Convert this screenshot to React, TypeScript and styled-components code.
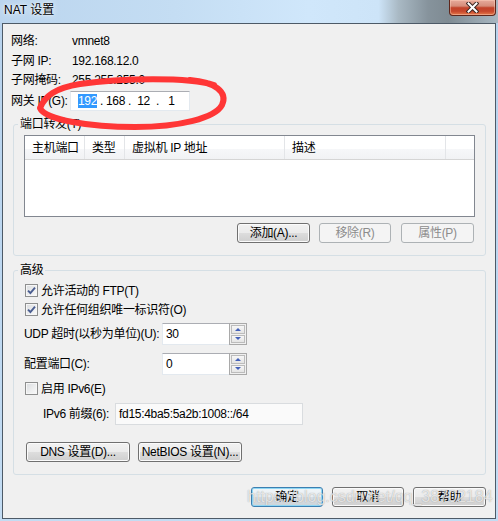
import React from 'react';
import styled, { createGlobalStyle, css } from 'styled-components';

const GlobalStyle = createGlobalStyle`
  html, body { margin: 0; padding: 0; }
  body {
    width: 498px; height: 521px; overflow: hidden;
    font-family: "Liberation Sans", "Noto Sans CJK SC", sans-serif;
    font-size: 12px; color: #000;
    letter-spacing: -0.3px;
  }
  * { box-sizing: border-box; }
`;

const Window = styled.div`
  position: relative;
  width: 498px;
  height: 521px;
  display: flex;
  flex-direction: column;
  background: linear-gradient(180deg, #b7d2ed 0%, #c3dcf3 100%);
  overflow: hidden;
`;

const TitleBar = styled.div`
  height: 23px;
  flex: none;
  display: flex;
  align-items: flex-start;
  background: linear-gradient(90deg, #bbd5ee 0%, #c4ddf3 35%, #d0e7fb 62%, #cde4f8 76%, #a9b9c4 80%, #86939c 86%, #7f8b93 90%, #a8b7c2 100%);
`;

const Title = styled.div`
  padding: 3px 0 0 4px;
  line-height: 15px;
  font-size: 12px;
  letter-spacing: 0;
  text-shadow: 0 0 6px rgba(255, 255, 255, 0.95), 0 0 2px rgba(255, 255, 255, 0.9);
`;

const CloseButton = styled.div`
  margin-left: auto;
  margin-right: 2px;
  width: 47px;
  height: 16px;
  border: 1px solid #5e261b;
  border-top: none;
  border-radius: 0 0 4px 4px;
  background: linear-gradient(180deg, #e7ab9c 0%, #d68d7a 40%, #c2432a 52%, #c7472c 75%, #e57a4c 100%);
  box-shadow: inset 0 0 0 1px rgba(255, 210, 190, 0.45);
  display: flex;
  align-items: center;
  justify-content: center;
`;

const Client = styled.div`
  flex: 1;
  margin: 0 2px 2px 2px;
  border: 1px solid #4d5a67;
  background: #f0f0f0;
  padding: 7px 9px 0 8px;
  display: flex;
  flex-direction: column;
`;

const InfoRow = styled.div<{ $h: number; $mt?: number }>`
  display: flex;
  align-items: center;
  height: ${(p) => p.$h}px;
  margin-top: ${(p) => p.$mt ?? 0}px;
  line-height: 14px;
  white-space: nowrap;
`;

const InfoLabel = styled.div<{ $w: number }>`
  width: ${(p) => p.$w}px;
  flex: none;
  white-space: nowrap;
`;

const IpField = styled.div`
  width: 120px;
  height: 20px;
  display: flex;
  align-items: center;
  padding-left: 6px;
  background: #fff;
  border: 1px solid #e3e9ef;
  border-top-color: #abadb3;
`;

const Octet = styled.div`
  width: 21px;
  text-align: center;
  line-height: 14px;
`;

const Dot = styled.div`
  width: 7px;
  text-align: center;
  line-height: 14px;
`;

const Selected = styled.span`
  background: #3399ff;
  color: #fff;
  display: inline-block;
  line-height: 14px;
`;

const Group = styled.fieldset<{ $mt: number }>`
  margin: ${(p) => p.$mt}px 0 0 2px;
  padding: 4px 10px 12px 10px;
  border: 1px solid #d5dfe5;
  border-radius: 3px;
  min-width: 0;
  display: flex;
  flex-direction: column;
`;

const Legend = styled.legend`
  margin-left: -6px;
  padding: 0 2px;
  line-height: 14px;
  font-size: 12px;
`;

const ListView = styled.div`
  height: 82px;
  border: 1px solid #828790;
  background: #fff;
`;

const ListHeader = styled.div`
  display: grid;
  grid-template-columns: 60px 40px 160px 161px 1fr;
  height: 24px;
  background: linear-gradient(180deg, #ffffff 0%, #ffffff 55%, #f6f7f9 56%, #f1f2f4 100%);
  border-bottom: 1px solid #d5d5d5;
`;

const HeaderCell = styled.div`
  border-right: 1px solid #e3e5e8;
  padding: 5px 0 0 7px;
  line-height: 14px;
  white-space: nowrap;
  &:last-child { border-right: none; }
`;

const ButtonRow = styled.div<{ $mt: number; $gap: number; $end?: boolean }>`
  display: flex;
  justify-content: ${(p) => (p.$end ? 'flex-end' : 'flex-start')};
  gap: ${(p) => p.$gap}px;
  margin-top: ${(p) => p.$mt}px;
`;

type Variant = 'normal' | 'disabled' | 'default';

const Button = styled.div<{ $w: number; $variant?: Variant; $ml?: number }>`
  width: ${(p) => p.$w}px;
  height: 20px;
  margin-left: ${(p) => p.$ml ?? 0}px;
  margin-right: ${(p) => (p.$variant === 'disabled' ? 1 : 0)}px;
  display: flex;
  align-items: center;
  justify-content: center;
  border-radius: 3px;
  line-height: 14px;
  white-space: nowrap;
  ${(p) =>
    p.$variant === 'disabled'
      ? css`
          border: 1px solid #adb2b5;
          background: #f4f4f4;
          color: #8c8c8c;
        `
      : p.$variant === 'default'
      ? css`
          border: 1px solid #3c7fb1;
          background: linear-gradient(180deg, #f0f5f8 0%, #e8eef2 50%, #d8dee3 51%, #cdd4d9 100%);
          box-shadow: inset 0 0 0 1px #8fd7f4;
        `
      : css`
          border: 1px solid #707070;
          background: linear-gradient(180deg, #f2f2f2 0%, #ebebeb 50%, #dddddd 51%, #cfcfcf 100%);
          box-shadow: inset 0 0 0 1px #fbfbfb;
        `}
`;

const CheckRow = styled.div<{ $mt?: number }>`
  display: flex;
  align-items: center;
  gap: 3px;
  height: 19px;
  margin-top: ${(p) => p.$mt ?? 0}px;
  padding-left: 1px;
  line-height: 14px;
  white-space: nowrap;
`;

const CheckBox = styled.div`
  width: 13px;
  height: 13px;
  flex: none;
  border: 1px solid #8e8f8f;
  background: linear-gradient(135deg, #d9dbde 0%, #eeeff0 60%, #fafafa 100%);
  box-shadow: inset 0 0 0 1px #f6f6f6;
  display: flex;
  align-items: center;
  justify-content: center;
`;

const FieldRow = styled.div<{ $mt?: number; $indent?: number }>`
  display: flex;
  align-items: center;
  height: 22px;
  margin-top: ${(p) => p.$mt ?? 0}px;
  padding-left: ${(p) => p.$indent ?? 0}px;
  line-height: 14px;
`;

const FieldLabel = styled.div<{ $w: number }>`
  width: ${(p) => p.$w}px;
  flex: none;
  white-space: nowrap;
`;

const SpinBox = styled.div`
  width: 85px;
  height: 22px;
  display: flex;
`;

const SpinText = styled.div`
  flex: 1;
  background: #fff;
  border: 1px solid #e3e9ef;
  border-top-color: #abadb3;
  border-right: none;
  padding: 3px 0 0 3px;
  line-height: 14px;
`;

const SpinCol = styled.div`
  width: 18px;
  border: 1px solid #a9a9a9;
  background: #f0f0f0;
  padding: 1px;
  display: flex;
  flex-direction: column;
  gap: 1px;
`;

const SpinBtn = styled.div`
  flex: 1;
  border: 1px solid #bcbcbc;
  background: linear-gradient(180deg, #f7f7f7 0%, #e4e4e4 100%);
  display: flex;
  align-items: center;
  justify-content: center;
`;

const Arrow = styled.div<{ $up?: boolean }>`
  width: 0;
  height: 0;
  border-left: 3px solid transparent;
  border-right: 3px solid transparent;
  ${(p) =>
    p.$up
      ? css`border-bottom: 3px solid #4360b8;`
      : css`border-top: 3px solid #4360b8;`}
`;

const PrefixBox = styled.div`
  width: 188px;
  height: 22px;
  background: #fafafa;
  border: 1px solid #d9dcdf;
  padding: 3px 0 0 3px;
  line-height: 14px;
  white-space: nowrap;
`;

const Overlay = styled.svg`
  position: absolute;
  left: 0;
  top: 0;
  pointer-events: none;
`;

const Watermark = styled.div`
  position: absolute;
  left: 247px;
  top: 487px;
  font-family: "Liberation Sans", sans-serif;
  font-size: 16px;
  letter-spacing: 0;
  line-height: 20px;
  color: rgba(255, 255, 255, 0.72);
  text-shadow: 0 0 1px rgba(80, 80, 80, 0.55);
  pointer-events: none;
  white-space: nowrap;
`;

const Check = () => (
  <svg width="9" height="9" viewBox="0 0 9 9">
    <path d="M1 4.6 L3.4 7 L8 1.6" fill="none" stroke="#4a5d90" strokeWidth="1.9" />
  </svg>
);

export default function App() {
  return (
    <>
      <GlobalStyle />
      <Window>
        <TitleBar>
          <Title>NAT 设置</Title>
          <CloseButton>
            <svg width="13" height="11" viewBox="0 0 13 11">
              <path d="M2.5 1.5 L10.5 9.5 M10.5 1.5 L2.5 9.5" stroke="#3a2622" strokeWidth="4" strokeLinecap="square" />
              <path d="M2.5 1.5 L10.5 9.5 M10.5 1.5 L2.5 9.5" stroke="#ffffff" strokeWidth="2" strokeLinecap="square" />
            </svg>
          </CloseButton>
        </TitleBar>
        <Client>
          <InfoRow $h={20}>
            <InfoLabel $w={61}>网络:</InfoLabel>
            <span>vmnet8</span>
          </InfoRow>
          <InfoRow $h={19}>
            <InfoLabel $w={61}>子网 IP:</InfoLabel>
            <span>192.168.12.0</span>
          </InfoRow>
          <InfoRow $h={19}>
            <InfoLabel $w={61}>子网掩码:</InfoLabel>
            <span>255.255.255.0</span>
          </InfoRow>
          <InfoRow $h={20} $mt={2}>
            <InfoLabel $w={59}>网关 IP(G):</InfoLabel>
            <IpField>
              <Octet><Selected>192</Selected></Octet>
              <Dot>.</Dot>
              <Octet>168</Octet>
              <Dot>.</Dot>
              <Octet>12</Octet>
              <Dot>.</Dot>
              <Octet>1</Octet>
            </IpField>
          </InfoRow>

          <Group $mt={6}>
            <Legend>端口转发(T)</Legend>
            <ListView>
              <ListHeader>
                <HeaderCell>主机端口</HeaderCell>
                <HeaderCell>类型</HeaderCell>
                <HeaderCell>虚拟机 IP 地址</HeaderCell>
                <HeaderCell>描述</HeaderCell>
                <HeaderCell />
              </ListHeader>
            </ListView>
            <ButtonRow $mt={6} $gap={9} $end>
              <Button $w={73}>添加(A)...</Button>
              <Button $w={72} $variant="disabled">移除(R)</Button>
              <Button $w={73} $variant="disabled">属性(P)</Button>
            </ButtonRow>
          </Group>

          <Group $mt={7}>
            <Legend>高级</Legend>
            <CheckRow>
              <CheckBox><Check /></CheckBox>
              <span>允许活动的 FTP(T)</span>
            </CheckRow>
            <CheckRow>
              <CheckBox><Check /></CheckBox>
              <span>允许任何组织唯一标识符(O)</span>
            </CheckRow>
            <FieldRow $mt={4}>
              <FieldLabel $w={138}>UDP 超时(以秒为单位)(U):</FieldLabel>
              <SpinBox>
                <SpinText>30</SpinText>
                <SpinCol>
                  <SpinBtn><Arrow $up /></SpinBtn>
                  <SpinBtn><Arrow /></SpinBtn>
                </SpinCol>
              </SpinBox>
            </FieldRow>
            <FieldRow $mt={8}>
              <FieldLabel $w={138}>配置端口(C):</FieldLabel>
              <SpinBox>
                <SpinText>0</SpinText>
                <SpinCol>
                  <SpinBtn><Arrow $up /></SpinBtn>
                  <SpinBtn><Arrow /></SpinBtn>
                </SpinCol>
              </SpinBox>
            </FieldRow>
            <CheckRow $mt={4}>
              <CheckBox />
              <span>启用 IPv6(E)</span>
            </CheckRow>
            <FieldRow $mt={5} $indent={19}>
              <FieldLabel $w={72}>IPv6 前缀(6):</FieldLabel>
              <PrefixBox>fd15:4ba5:5a2b:1008::/64</PrefixBox>
            </FieldRow>
            <ButtonRow $mt={17} $gap={8}>
              <Button $w={104} $ml={2}>DNS 设置(D)...</Button>
              <Button $w={104}>NetBIOS 设置(N)...</Button>
            </ButtonRow>
          </Group>

          <ButtonRow $mt={12} $gap={9} $end>
            <Button $w={72} $variant="default">确定</Button>
            <Button $w={72}>取消</Button>
            <Button $w={73}>帮助</Button>
          </ButtonRow>
        </Client>

        <Overlay width="498" height="521" viewBox="0 0 498 521">
          <path
            d="M 214 85 C 190 77, 120 78, 80 84 C 55 88, 45 96, 40 108 C 45 120, 90 127, 135 127 C 180 127, 215 118, 222 105 C 228 92, 215 82, 190 80"
            fill="none"
            stroke="#ff3636"
            strokeWidth="6"
            strokeLinecap="round"
            strokeLinejoin="round"
          />
        </Overlay>
        <Watermark>https://blog.csdn.net/qq_38702184</Watermark>
      </Window>
    </>
  );
}
